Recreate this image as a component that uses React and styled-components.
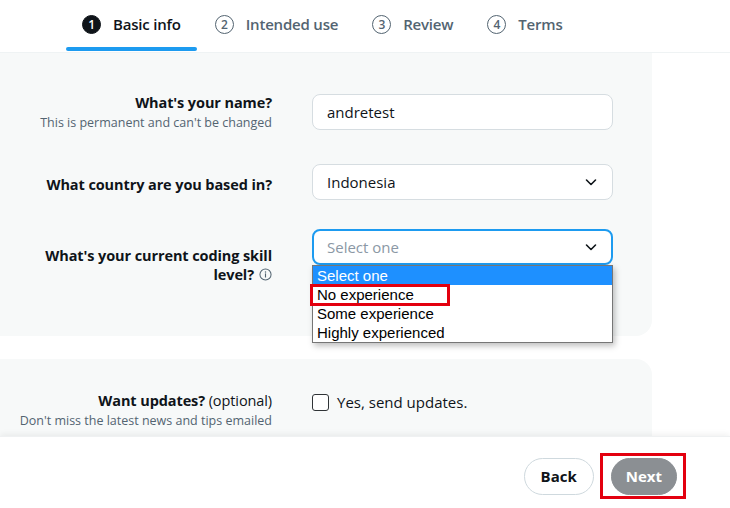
import React from "react";
import styled, { createGlobalStyle } from "styled-components";

const Global = createGlobalStyle`
  html, body { margin: 0; padding: 0; background: #fff; }
  body { font-family: "Open Sans", "Noto Sans", sans-serif; color: #0f1419; }
  * { box-sizing: border-box; }
`;

const Page = styled.div`
  width: 730px;
  height: 508px;
  display: flex;
  flex-direction: column;
  overflow: hidden;
  position: relative;
`;

const Tabs = styled.nav`
  height: 53px;
  flex: none;
  display: flex;
  padding-left: 66px;
  border-bottom: 1px solid #eff3f4;
`;

const Tab = styled.div`
  position: relative;
  display: flex;
  align-items: center;
  gap: 12px;
  height: 100%;
  padding: 0 16px;
  margin-right: 2px;
  font-size: 15px;
  font-weight: 600;
  letter-spacing: -0.2px;
  color: ${p => (p.$active ? "#0f1419" : "#536471")};
  padding-bottom: 4px;
  &::after {
    content: "";
    display: ${p => (p.$active ? "block" : "none")};
    position: absolute;
    left: 0;
    right: 0;
    bottom: 1px;
    height: 4px;
    border-radius: 2px;
    background: #1d9bf0;
  }
`;

const StepNum = styled.span`
  width: 19px;
  height: 19px;
  border-radius: 50%;
  display: flex;
  align-items: center;
  justify-content: center;
  font-size: 12px;
  font-weight: 600;
  border: 1px solid ${p => (p.$active ? "#0f1419" : "#536471")};
  background: ${p => (p.$active ? "#0f1419" : "transparent")};
  color: ${p => (p.$active ? "#fff" : "#536471")};
`;

const Body = styled.div`
  flex: 1;
  overflow: hidden;
  display: flex;
  flex-direction: column;
  gap: 23px;
`;

const Panel = styled.section`
  width: 652px;
  flex: none;
  background: #f7f9f9;
  border-radius: ${p => p.$radius};
  padding: ${p => p.$pad};
  display: flex;
  flex-direction: column;
`;

const Row = styled.div`
  display: grid;
  grid-template-columns: 272px 301px;
  column-gap: 40px;
  margin-top: ${p => p.$mt || 0}px;
  align-items: ${p => p.$align || "center"};
`;

const LabelBlock = styled.div`
  text-align: right;
  padding-top: ${p => p.$top || 0}px;
  display: flex;
  flex-direction: column;
  gap: 2px;
`;

const Title = styled.div`
  font-size: 14.5px;
  font-weight: 700;
  line-height: 19px;
  color: #0f1419;
  letter-spacing: -0.1px;
`;

const Optional = styled.span`
  font-weight: 400;
`;

const Sub = styled.div`
  font-size: 12.5px;
  line-height: 17px;
  color: #536471;
  white-space: nowrap;
`;

const Field = styled.div`
  position: relative;
  height: 36px;
  border-radius: 8px;
  border: ${p => (p.$focus ? "2px solid #1d9bf0" : "1px solid #d6dde1")};
  background: #fff;
  display: flex;
  align-items: center;
  justify-content: space-between;
  padding: 0 ${p => (p.$focus ? 13 : 14)}px;
  font-size: 15px;
  color: ${p => (p.$placeholder ? "#8b98a5" : "#0f1419")};
`;

const Chevron = () => (
  <svg width="14" height="14" viewBox="0 0 14 14" fill="none">
    <path d="M2.5 5 L7 9.5 L11.5 5" stroke="#0f1419" strokeWidth="1.6" strokeLinecap="round" strokeLinejoin="round" />
  </svg>
);

const InfoIcon = () => (
  <svg width="13" height="13" viewBox="0 0 14 14" style={{ marginLeft: 5, verticalAlign: "-1px" }}>
    <circle cx="7" cy="7" r="6" fill="none" stroke="#536471" strokeWidth="1.1" />
    <circle cx="7" cy="4.2" r="0.8" fill="#536471" />
    <rect x="6.4" y="5.8" width="1.2" height="4.4" fill="#536471" />
  </svg>
);

const OptionList = styled.ul`
  position: absolute;
  z-index: 5;
  left: -2px;
  top: 34px;
  width: 301px;
  margin: 0;
  padding: 0;
  list-style: none;
  background: #fff;
  border: 1px solid #767676;
  box-shadow: 2px 3px 6px rgba(0, 0, 0, 0.25);
  font-family: "Liberation Sans", Arial, sans-serif;
  font-size: 15px;
`;

const Option = styled.li`
  height: 19px;
  line-height: 19px;
  padding-left: 4px;
  color: ${p => (p.$selected ? "#fff" : "#000")};
  background: ${p => (p.$selected ? "#1e90ff" : "#fff")};
  position: relative;
`;

const Highlight = styled.span`
  position: absolute;
  left: ${p => p.$l}px;
  top: ${p => p.$t}px;
  width: ${p => p.$w}px;
  height: ${p => p.$h}px;
  border: 3px solid #e3000f;
  pointer-events: none;
`;

const CheckRow = styled.label`
  display: flex;
  align-items: center;
  gap: 8px;
  font-size: 15px;
  color: #0f1419;
  align-self: start;
  margin-top: 1px;
`;

const Box = styled.span`
  width: 17px;
  height: 17px;
  border: 1.5px solid #2f3336;
  border-radius: 3px;
  background: #fff;
`;

const Footer = styled.footer`
  position: absolute;
  left: 0;
  right: 0;
  bottom: 0;
  height: 72px;
  background: #fff;
  box-shadow: 0 -2px 6px rgba(0, 0, 0, 0.06);
  border-top: 1px solid #eff1f2;
  display: flex;
  justify-content: flex-end;
  align-items: center;
  gap: 17px;
  padding-right: 53px;
  padding-top: 7px;
`;

const Button = styled.button`
  position: relative;
  height: 37px;
  padding: 0 ${p => (p.$primary ? 14 : 16)}px;
  border-radius: 999px;
  font-family: inherit;
  font-size: 15px;
  font-weight: 700;
  border: 1px solid ${p => (p.$primary ? "#8b8f93" : "#cfd9de")};
  background: ${p => (p.$primary ? "#8b8f93" : "#fff")};
  color: ${p => (p.$primary ? "#fff" : "#0f1419")};
`;

const steps = ["Basic info", "Intended use", "Review", "Terms"];

export default function App() {
  return (
    <Page>
      <Global />
      <Tabs>
        {steps.map((s, i) => (
          <Tab key={s} $active={i === 0}>
            <StepNum $active={i === 0}>{i + 1}</StepNum>
            {s}
          </Tab>
        ))}
      </Tabs>
      <Body>
        <Panel $radius="0 0 16px 0" $pad="40px 0 52px 0">
          <Row>
            <LabelBlock>
              <Title>What's your name?</Title>
              <Sub>This is permanent and can't be changed</Sub>
            </LabelBlock>
            <Field>andretest</Field>
          </Row>
          <Row $mt={33}>
            <LabelBlock $top={4}>
              <Title>What country are you based in?</Title>
            </LabelBlock>
            <Field>
              Indonesia
              <Chevron />
            </Field>
          </Row>
          <Row $mt={29} $align="start">
            <LabelBlock $top={17}>
              <Title>
                What's your current coding skill
                <br />
                level?
                <InfoIcon />
              </Title>
            </LabelBlock>
            <Field $focus $placeholder>
              Select one
              <Chevron />
              <OptionList>
                <Option $selected>Select one</Option>
                <Option>No experience</Option>
                <Option>Some experience</Option>
                <Option>Highly experienced</Option>
                <Highlight $l={-3} $t={18} $w={140} $h={22} />
              </OptionList>
            </Field>
          </Row>
        </Panel>
        <Panel $radius="0 16px 0 0" $pad="32px 0 40px 0">
          <Row $align="start">
            <LabelBlock>
              <Title>
                Want updates? <Optional>(optional)</Optional>
              </Title>
              <Sub>Don't miss the latest news and tips emailed</Sub>
            </LabelBlock>
            <CheckRow>
              <Box />
              Yes, send updates.
            </CheckRow>
          </Row>
        </Panel>
      </Body>
      <Footer>
        <Button>Back</Button>
        <Button $primary>
          Next
          <Highlight $l={-12} $t={-6} $w={86} $h={46} />
        </Button>
      </Footer>
    </Page>
  );
}
